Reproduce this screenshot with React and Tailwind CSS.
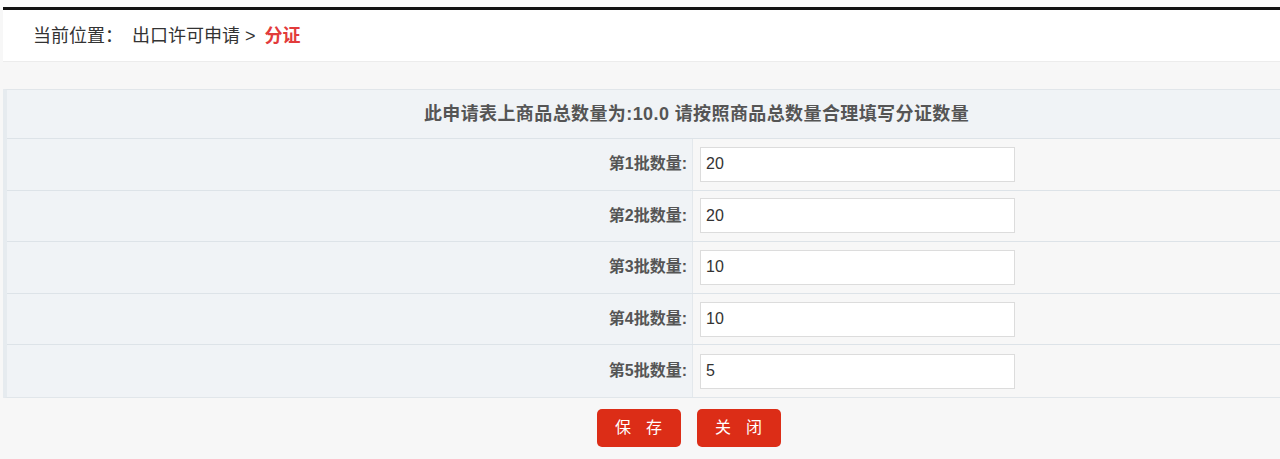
import React from "react";

const rows = [
  { label: "第1批数量:", value: "20" },
  { label: "第2批数量:", value: "20" },
  { label: "第3批数量:", value: "10" },
  { label: "第4批数量:", value: "10" },
  { label: "第5批数量:", value: "5" },
];

function Btn({ a, b }) {
  return (
    <button className="w-[84px] h-[38px] rounded-[5px] bg-[#dc2d17] text-white text-[16px] flex items-center justify-center gap-[15px]">
      <span>{a}</span>
      <span>{b}</span>
    </button>
  );
}

export default function App() {
  return (
    <div
      className="w-[1280px] h-[459px] overflow-hidden bg-[#f7f7f7]"
      style={{ fontFamily: '"Liberation Sans", Arial, "Noto Sans CJK SC", sans-serif' }}
    >
      <div className="h-[7px] bg-[#fafafa]"></div>
      <div className="ml-[3px] h-[3px] bg-[#111]"></div>
      <div className="ml-[3px] h-[52px] bg-white border-b border-[#ececec] flex items-center pl-[30px] pt-[1px] text-[18px] text-[#333]">
        <span>当前位置：</span>
        <span className="ml-[9px]">出口许可申请 &gt;</span>
        <span className="ml-[9px] font-bold text-[#e23b3b]">分证</span>
      </div>
      <div className="w-[1390px] pt-[27px]">
        <div className="ml-[3px] w-[1384px] border border-[#e1e6ea] border-l-[4px] border-l-[#e6ebef]">
          <div className="h-[49px] bg-[#f0f3f6] flex items-center justify-center text-[18px] font-bold tracking-[0.4px] text-[#555] border-b border-[#dde3e8]">
            此申请表上商品总数量为:10.0 请按照商品总数量合理填写分证数量
          </div>
          {rows.map((r, i) => (
            <div
              key={i}
              className={`flex h-[51.6px] ${i < rows.length - 1 ? "border-b border-[#dde3e8]" : ""}`}
            >
              <div className="w-[686px] bg-[#f0f3f6] border-r border-[#e3e8ec] flex items-center justify-end pr-[5px] text-[16px] font-bold text-[#555]">
                {r.label}
              </div>
              <div className="flex-1 bg-[#f7f7f7] flex items-center pl-[7px]">
                <input
                  readOnly
                  value={r.value}
                  className="w-[315px] h-[35px] bg-white border border-[#dcdcdc] px-[5px] text-[16px] text-[#333] outline-none"
                  style={{ fontFamily: '"Liberation Sans", Arial, sans-serif' }}
                />
              </div>
            </div>
          ))}
        </div>
        <div className="flex justify-center gap-[16px] pt-[11px] pr-[13px]">
          <Btn a="保" b="存" />
          <Btn a="关" b="闭" />
        </div>
      </div>
    </div>
  );
}
